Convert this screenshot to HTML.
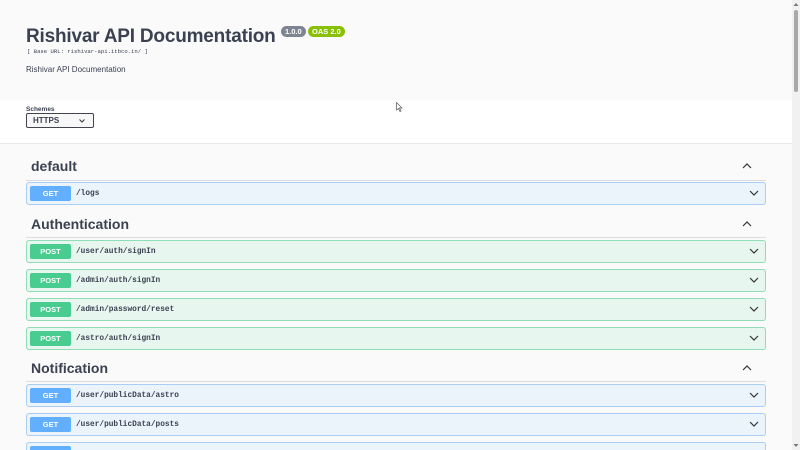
<!DOCTYPE html>
<html style="width:800px;height:450px;overflow:hidden"><head><style>
*{margin:0;padding:0;box-sizing:border-box}
body{width:800px;height:450px;overflow:hidden;background:#fafafa;font-family:"Liberation Sans",sans-serif;position:relative;color:#3b4151}
.a{position:absolute}
h1{position:absolute;left:26px;top:26px;font-size:19px;font-weight:bold;color:#3b4151;letter-spacing:-0.2px;white-space:nowrap}
.badge{position:absolute;top:26px;height:11px;border-radius:6px;color:#fff;font-size:7.5px;font-weight:bold;line-height:11px;padding:0 4px}
.sec{position:absolute;left:31px;font-size:14px;font-weight:bold}
.line{position:absolute;left:26px;width:740px;height:1px;background:#dcdde0}
.up{position:absolute;left:742px;width:10px;height:10px}
.op{position:absolute;left:26px;width:740px;height:23px;border-radius:3px;border:1px solid}
.get{background:#ebf3fb;border-color:#a9cdf3}
.post{background:#e8f6f0;border-color:#8fdcb6}
.m{position:absolute;left:3px;top:3px;width:41px;height:15px;border-radius:2px;color:#fff;font-size:7.5px;font-weight:bold;text-align:center;line-height:15px}
.get .m{background:#61affe}.post .m{background:#49cc90}
.p{position:absolute;left:49px;top:6px;line-height:10px;font-family:"Liberation Mono",monospace;font-weight:bold;font-size:7.8px;color:#3b4151}
.dn{position:absolute;left:722px;top:6px}
</style></head><body>
<h1>Rishivar API Documentation</h1>
<div class="badge" style="left:281px;background:#7d8492">1.0.0</div>
<div class="badge" style="left:308px;background:#89bf04">OAS 2.0</div>
<div class="a" style="left:27px;top:48px;font-family:'Liberation Mono',monospace;font-size:5.6px;color:#3b4151">[ Base URL: rishivar-api.itbco.in/ ]</div>
<div class="a" style="left:26px;top:65px;font-size:8px">Rishivar API Documentation</div>
<div class="a" style="left:0;top:100px;width:792px;height:44px;background:#fff;border-bottom:1px solid #e8e8e8"></div>
<div class="a" style="left:26px;top:106px;font-size:6.5px;font-weight:bold">Schemes</div>
<div class="a" style="left:26px;top:113px;width:68px;height:15px;border:1px solid #41444e;border-radius:2px;font-size:8px;font-weight:bold;padding:2px 0 0 6px;background:#f7f7f7">HTTPS<svg style="position:absolute;left:52px;top:5px" width="6" height="4"><path d="M0.5 0.5L3 3L5.5 0.5" stroke="#333" fill="none" stroke-width="1"/></svg></div>
<svg class="a" style="left:396px;top:102px" width="7" height="10"><path d="M0.5 0.5V8L2.5 6.5L4 9.5L5 9L3.5 6H6Z" fill="#fff" stroke="#555" stroke-width="0.7"/></svg>

<div class="sec" style="top:158px">default</div>
<svg class="up" style="top:161px"><path d="M1 7L5 3L9 7" stroke="#333" fill="none" stroke-width="1.2"/></svg>
<div class="line" style="top:180px"></div>
<div class="op get" style="top:182px"><div class="m">GET</div><div class="p">/logs</div><svg class="dn" width="10" height="8"><path d="M1 2L5 6L9 2" stroke="#333" fill="none" stroke-width="1.2"/></svg></div>

<div class="sec" style="top:216px">Authentication</div>
<svg class="up" style="top:219px"><path d="M1 7L5 3L9 7" stroke="#333" fill="none" stroke-width="1.2"/></svg>
<div class="line" style="top:237px"></div>
<div class="op post" style="top:240px"><div class="m">POST</div><div class="p">/user/auth/signIn</div><svg class="dn" width="10" height="8"><path d="M1 2L5 6L9 2" stroke="#333" fill="none" stroke-width="1.2"/></svg></div>
<div class="op post" style="top:269px"><div class="m">POST</div><div class="p">/admin/auth/signIn</div><svg class="dn" width="10" height="8"><path d="M1 2L5 6L9 2" stroke="#333" fill="none" stroke-width="1.2"/></svg></div>
<div class="op post" style="top:298px"><div class="m">POST</div><div class="p">/admin/password/reset</div><svg class="dn" width="10" height="8"><path d="M1 2L5 6L9 2" stroke="#333" fill="none" stroke-width="1.2"/></svg></div>
<div class="op post" style="top:327px"><div class="m">POST</div><div class="p">/astro/auth/signIn</div><svg class="dn" width="10" height="8"><path d="M1 2L5 6L9 2" stroke="#333" fill="none" stroke-width="1.2"/></svg></div>

<div class="sec" style="top:360px">Notification</div>
<svg class="up" style="top:363px"><path d="M1 7L5 3L9 7" stroke="#333" fill="none" stroke-width="1.2"/></svg>
<div class="line" style="top:381px"></div>
<div class="op get" style="top:384px"><div class="m">GET</div><div class="p">/user/publicData/astro</div><svg class="dn" width="10" height="8"><path d="M1 2L5 6L9 2" stroke="#333" fill="none" stroke-width="1.2"/></svg></div>
<div class="op get" style="top:413px"><div class="m">GET</div><div class="p">/user/publicData/posts</div><svg class="dn" width="10" height="8"><path d="M1 2L5 6L9 2" stroke="#333" fill="none" stroke-width="1.2"/></svg></div>
<div class="op get" style="top:442px;height:8px;border-bottom:none;border-radius:3px 3px 0 0;overflow:hidden"><div class="m">GET</div></div>

<div class="a" style="left:792px;top:0;width:8px;height:450px;background:#f1f1f1"></div>
<div class="a" style="left:794px;top:10px;width:4px;height:82px;background:#a8a8a8;border-radius:2px"></div>
<svg class="a" style="left:793px;top:2px" width="6" height="5"><path d="M0.5 4L3 1L5.5 4Z" fill="#777"/></svg>
<svg class="a" style="left:793px;top:443px" width="6" height="5"><path d="M0.5 1L3 4L5.5 1Z" fill="#777"/></svg>
</body></html>
